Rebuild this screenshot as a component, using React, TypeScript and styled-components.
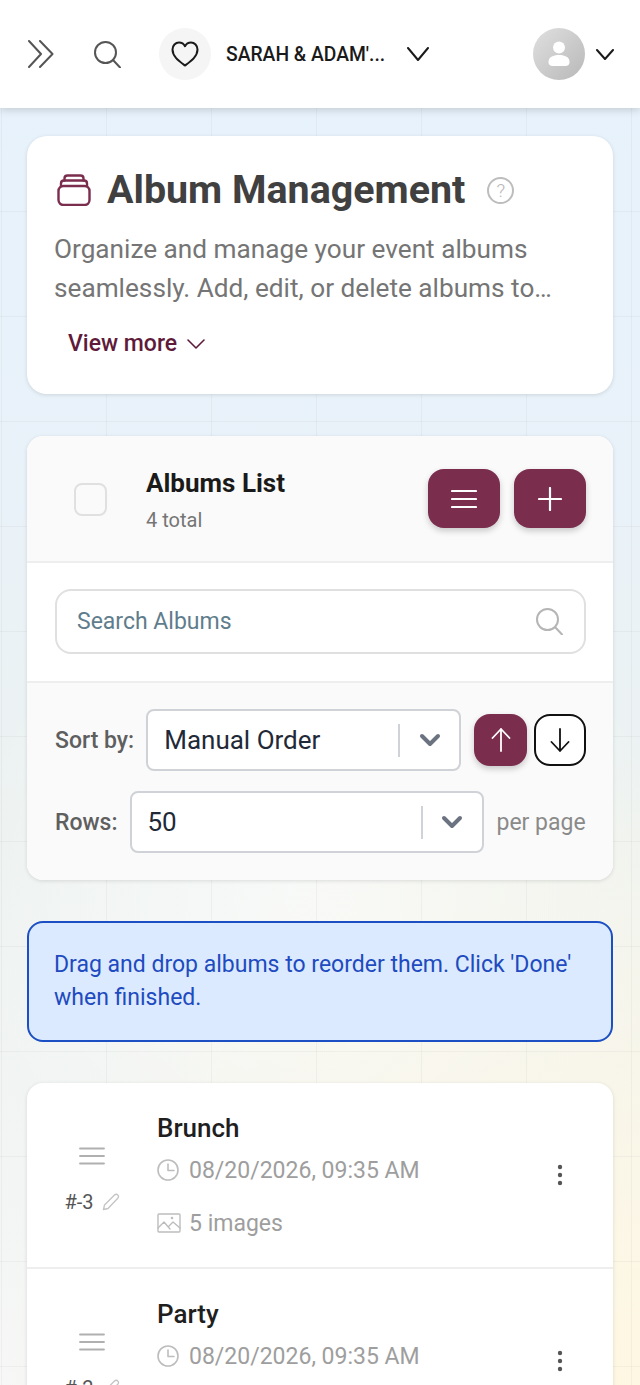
import React, { ReactNode } from 'react';
import styled, { createGlobalStyle } from 'styled-components';

const GlobalStyle = createGlobalStyle`
  html, body {
    margin: 0;
    padding: 0;
    background: #fff;
    font-family: Roboto, "Liberation Sans", sans-serif;
  }
  * { box-sizing: border-box; }
`;

const wine = '#7b2d4e';

const albums: { title: string; order: string; date: string; images?: string }[] = [
  { title: 'Brunch', order: '#-3', date: '08/20/2026, 09:35 AM', images: '5 images' },
  { title: 'Party', order: '#-2', date: '08/20/2026, 09:35 AM' },
];

function Icon(props: { size: number; height?: number; color?: string; sw?: number; children: ReactNode }) {
  const h = props.height ?? props.size;
  return (
    <svg
      width={props.size}
      height={h}
      viewBox={`0 0 ${props.size} ${h}`}
      fill="none"
      stroke={props.color ?? 'currentColor'}
      strokeWidth={props.sw ?? 2}
      strokeLinecap="round"
      strokeLinejoin="round"
    >
      {props.children}
    </svg>
  );
}

const SearchGlass = (p: { color: string }) => (
  <Icon size={28} color={p.color}>
    <circle cx="12.5" cy="12.5" r="10.5" />
    <path d="M20 20l7 7.5" />
  </Icon>
);

const Caret = (p: { color: string; w: number; h: number; sw?: number }) => (
  <Icon size={p.w} height={p.h} color={p.color} sw={p.sw}>
    <path d={`M1 1L${p.w / 2} ${p.h - 1}L${p.w - 1} 1`} />
  </Icon>
);

const SelectChevron = () => (
  <Icon size={22} height={14} color="#6b7280" sw={4}>
    <path d="M3 3l8 8l8-8" />
  </Icon>
);

export default function App() {
  return (
    <Screen>
      <GlobalStyle />
      <TopBar>
        <BarIcon>
          <Icon size={26} height={28} color="#555" sw={2}>
            <path d="M1 1l12 13L1 27M12 1l12.5 13L12 27" />
          </Icon>
        </BarIcon>
        <SearchSlot>
          <SearchGlass color="#555" />
        </SearchSlot>
        <EventAvatar>
          <Icon size={28} height={26} color="#1a1a1a" sw={2}>
            <path d="M14 24.5C8 20 1.5 15.5 1.5 8.5C1.5 4.5 4.5 1.5 8 1.5C10.6 1.5 12.8 2.8 14 5.2C15.2 2.8 17.4 1.5 20 1.5C23.5 1.5 26.5 4.5 26.5 8.5C26.5 15.5 20 20 14 24.5Z" />
          </Icon>
        </EventAvatar>
        <EventName>SARAH &amp; ADAM'...</EventName>
        <Caret color="#1a1a1a" w={22} h={14} />
        <Spacer />
        <UserAvatar>
          <svg width="22" height="26" viewBox="0 0 22 26" fill="#fff">
            <circle cx="11" cy="6.5" r="6" />
            <path d="M0.5 21C0.5 16 5 14 11 14C17 14 21.5 16 21.5 21C21.5 24 19.5 25 17 25H5C2.5 25 0.5 24 0.5 21Z" />
          </svg>
        </UserAvatar>
        <UserCaret>
          <Caret color="#1a1a1a" w={18} h={11} />
        </UserCaret>
      </TopBar>

      <Content>
        <IntroCard>
          <TitleRow>
            <Icon size={34} height={32} color={wine} sw={2.4}>
              <rect x="1.5" y="12" width="31" height="19" rx="5" />
              <path d="M4 12V9.5C4 7.5 5.5 6.5 7 6.5H27C28.5 6.5 30 7.5 30 9.5V12" />
              <path d="M7.5 6.5V4.5C7.5 2.5 9 1.5 10.5 1.5H23.5C25 1.5 26.5 2.5 26.5 4.5V6.5" />
            </Icon>
            <Title>Album Management</Title>
            <HelpBadge>?</HelpBadge>
          </TitleRow>
          <Description>
            Organize and manage your event albums
            <br />
            seamlessly. Add, edit, or delete albums to…
          </Description>
          <ViewMore>
            View more
            <Caret color="#5f1a3a" w={18} h={10} sw={1.6} />
          </ViewMore>
        </IntroCard>

        <ListCard>
          <ListHead>
            <CheckBox />
            <ListHeading>
              <ListTitle>Albums List</ListTitle>
              <ListCount>4 total</ListCount>
            </ListHeading>
            <WineButton>
              <Icon size={26} height={20} color="#fff" sw={2.2}>
                <path d="M1 2h24M1 10h24M1 18h24" />
              </Icon>
            </WineButton>
            <WineButton>
              <Icon size={24} color="#fff" sw={2.2}>
                <path d="M12 1v22M1 12h22" />
              </Icon>
            </WineButton>
          </ListHead>

          <SearchSection>
            <SearchBox>
              <SearchHint>Search Albums</SearchHint>
              <SearchGlass color="#b5b5b5" />
            </SearchBox>
          </SearchSection>

          <SortSection>
            <ControlRow>
              <ControlLabel>Sort by:</ControlLabel>
              <SelectBox $width={315}>
                <SelectValue>Manual Order</SelectValue>
                <SelectSplit />
                <SelectArrow>
                  <SelectChevron />
                </SelectArrow>
              </SelectBox>
              <OrderButton $active>
                <Icon size={20} height={24} color="#fff" sw={1.8}>
                  <path d="M10 23V1M1.5 10L10 1l8.5 9" />
                </Icon>
              </OrderButton>
              <OrderButton>
                <Icon size={20} height={24} color="#111" sw={1.8}>
                  <path d="M10 1v22M1.5 14l8.5 9l8.5-9" />
                </Icon>
              </OrderButton>
            </ControlRow>
            <ControlRow>
              <ControlLabel>Rows:</ControlLabel>
              <SelectBox $width={354}>
                <SelectValue>50</SelectValue>
                <SelectSplit />
                <SelectArrow>
                  <SelectChevron />
                </SelectArrow>
              </SelectBox>
              <PerPage>per page</PerPage>
            </ControlRow>
          </SortSection>
        </ListCard>

        <Notice>Drag and drop albums to reorder them. Click 'Done' when finished.</Notice>

        <RowsCard>
          {albums.map(a => (
            <AlbumRow key={a.title}>
              <HandleColumn>
                <Icon size={26} height={18} color="#b0b0b0" sw={1.8}>
                  <path d="M1 1.5h24M1 9h24M1 16.5h24" />
                </Icon>
                <OrderLine>
                  {a.order}
                  <Icon size={18} color="#c4c4c4" sw={1.3}>
                    <path d="M1.5 16.5l1-4.5L12.5 2c1-1 2.5-1 3.3 0c.8.8.8 2.3 0 3.2L6 15.5z" />
                  </Icon>
                </OrderLine>
              </HandleColumn>
              <AlbumInfo>
                <AlbumTitle>{a.title}</AlbumTitle>
                <DateLine>
                  <Icon size={22} color="#bdbdbd" sw={1.6}>
                    <circle cx="11" cy="11" r="10" />
                    <path d="M11 5v6.5h6" />
                  </Icon>
                  {a.date}
                </DateLine>
                {a.images && (
                  <ImagesLine>
                    <Icon size={24} height={20} color="#bdbdbd" sw={1.4}>
                      <rect x="1" y="1" width="22" height="18" rx="1" />
                      <path d="M1 15l6-6l6 7M12 13l4-4l7 6" />
                      <circle cx="15" cy="5" r="0.6" />
                    </Icon>
                    {a.images}
                  </ImagesLine>
                )}
              </AlbumInfo>
              <KebabColumn>
                <svg width="6" height="22" viewBox="0 0 6 22" fill="#555">
                  <circle cx="3" cy="3" r="2.2" />
                  <circle cx="3" cy="11" r="2.2" />
                  <circle cx="3" cy="19" r="2.2" />
                </svg>
              </KebabColumn>
            </AlbumRow>
          ))}
        </RowsCard>
      </Content>
    </Screen>
  );
}

const Screen = styled.div`
  width: 640px;
  height: 1385px;
  overflow: hidden;
  background-color: #f4f6f4;
  background-image:
    linear-gradient(to right, rgba(120, 120, 120, 0.07) 1px, transparent 1px),
    linear-gradient(to bottom, rgba(120, 120, 120, 0.07) 1px, transparent 1px),
    radial-gradient(circle at 100% 100%, rgba(254, 247, 226, 1) 0%, rgba(254, 247, 226, 0) 42%),
    radial-gradient(circle at 50% 65%, rgba(255, 255, 255, 0.6) 0%, rgba(255, 255, 255, 0) 38%),
    linear-gradient(180deg, #e6f2fc 0%, #e9f2f9 35%, #edf2f0 60%, #f6f7f6 100%);
  background-size: 105px 105px, 105px 105px, 100% 100%, 100% 100%, 100% 100%;
  background-position: 1px 1px, 1px 1px, 0 0, 0 0, 0 0;
`;

const TopBar = styled.header`
  height: 108px;
  display: flex;
  align-items: center;
  padding: 0 26px 0 28px;
  background: #fff;
  box-shadow: 0 2px 8px rgba(0, 0, 0, 0.16);
`;

const BarIcon = styled.div`
  width: 26px;
  display: flex;
`;

const SearchSlot = styled.div`
  margin-left: 39px;
  display: flex;
`;

const EventAvatar = styled.div`
  width: 52px;
  height: 52px;
  margin-left: 38px;
  border-radius: 50%;
  background: #f5f5f5;
  display: flex;
  align-items: center;
  justify-content: center;
`;

const EventName = styled.span`
  width: 159px;
  margin: 0 22px 0 15px;
  font-size: 19.3px;
  font-weight: 500;
  color: #1a1a1a;
  white-space: nowrap;
`;

const Spacer = styled.div`
  flex: 1;
`;

const UserAvatar = styled.div`
  width: 52px;
  height: 52px;
  border-radius: 50%;
  background: linear-gradient(135deg, #e0e0e0, #b8b8b8);
  display: flex;
  align-items: center;
  justify-content: center;
`;

const UserCaret = styled.div`
  margin-left: 11px;
  display: flex;
`;

const Content = styled.main`
  padding: 28px 27px 0;
  display: flex;
  flex-direction: column;
`;

const IntroCard = styled.section`
  height: 258px;
  padding: 30px 28px 0;
  background: #fff;
  border-radius: 20px;
  box-shadow: 0 1px 4px rgba(0, 0, 0, 0.12);
`;

const TitleRow = styled.div`
  display: flex;
  align-items: center;
  height: 48px;
  padding-left: 2px;
`;

const Title = styled.h1`
  margin: 0 22px 0 16px;
  font-size: 39.4px;
  font-weight: 700;
  line-height: 48px;
  color: #404040;
  white-space: nowrap;
`;

const HelpBadge = styled.span`
  width: 27px;
  height: 27px;
  border-radius: 50%;
  border: 2px solid #bdbdbd;
  display: flex;
  align-items: center;
  justify-content: center;
  font-size: 19px;
  font-weight: 300;
  color: #b5b5b5;
`;

const Description = styled.p`
  margin: 16px 0 0 -1px;
  font-size: 26.2px;
  line-height: 39px;
  color: #757575;
  white-space: nowrap;
`;

const ViewMore = styled.div`
  margin: 20px 0 0 13px;
  display: flex;
  align-items: center;
  gap: 10px;
  font-size: 23px;
  font-weight: 500;
  line-height: 32px;
  color: #5f1a3a;
`;

const ListCard = styled.section`
  margin-top: 42px;
  height: 444px;
  border-radius: 16px;
  background: #fff;
  overflow: hidden;
  box-shadow: 0 1px 4px rgba(0, 0, 0, 0.12);
`;

const ListHead = styled.div`
  height: 127px;
  padding: 0 27px 0 47px;
  display: flex;
  align-items: center;
  gap: 14px;
  background: #fafafa;
  border-bottom: 2px solid #eeeeee;
`;

const CheckBox = styled.div`
  width: 33px;
  height: 33px;
  margin-top: 1px;
  border: 2px solid #e0e0e0;
  border-radius: 8px;
`;

const ListHeading = styled.div`
  flex: 1;
  margin: 2px 0 0 25px;
  display: flex;
  flex-direction: column;
  gap: 8px;
`;

const ListTitle = styled.div`
  font-size: 26px;
  font-weight: 700;
  line-height: 32px;
  color: #1a1a1a;
`;

const ListCount = styled.div`
  font-size: 20px;
  line-height: 26px;
  color: #757575;
`;

const WineButton = styled.button`
  width: 72px;
  height: 59px;
  padding: 0;
  border: 0;
  border-radius: 16px;
  background: ${wine};
  display: flex;
  align-items: center;
  justify-content: center;
  box-shadow: 0 3px 6px rgba(0, 0, 0, 0.2);
`;

const SearchSection = styled.div`
  height: 120px;
  padding: 0 27px 2px 28px;
  display: flex;
  align-items: center;
  border-bottom: 2px solid #eeeeee;
`;

const SearchBox = styled.div`
  width: 100%;
  height: 65px;
  padding: 0 21px 0 20px;
  display: flex;
  align-items: center;
  justify-content: space-between;
  border: 2px solid #e0e0e0;
  border-radius: 16px;
  background: #fff;
`;

const SearchHint = styled.span`
  font-size: 23px;
  color: #5f7d8c;
`;

const SortSection = styled.div`
  height: 197px;
  padding: 26px 27px 0 28px;
  display: flex;
  flex-direction: column;
  gap: 20px;
  background: #fafafa;
`;

const ControlRow = styled.div`
  height: 62px;
  display: flex;
  align-items: center;
`;

const ControlLabel = styled.span`
  margin-right: 12px;
  font-size: 23px;
  font-weight: 500;
  color: #5f5f5f;
  white-space: nowrap;
`;

const SelectBox = styled.div<{ $width: number }>`
  width: ${p => p.$width}px;
  height: 62px;
  flex-shrink: 0;
  display: flex;
  align-items: center;
  border: 2px solid #cfd2d6;
  border-radius: 8px;
  background: #fff;
`;

const SelectValue = styled.span`
  flex: 1;
  padding-left: 16px;
  font-size: 26px;
  color: #1f2937;
`;

const SelectSplit = styled.div`
  width: 2px;
  height: 33px;
  background: #cfd2d6;
`;

const SelectArrow = styled.div`
  width: 59px;
  display: flex;
  justify-content: center;
`;

const OrderButton = styled.button<{ $active?: boolean }>`
  width: ${p => (p.$active ? 53 : 52)}px;
  height: 52px;
  padding: 0;
  margin-left: ${p => (p.$active ? 13 : 7)}px;
  border: ${p => (p.$active ? '0' : '2px solid #111')};
  border-radius: 16px;
  background: ${p => (p.$active ? wine : '#fff')};
  display: flex;
  align-items: center;
  justify-content: center;
  box-shadow: ${p => (p.$active ? '0 3px 6px rgba(0, 0, 0, 0.2)' : 'none')};
`;

const PerPage = styled.span`
  margin-left: 13px;
  font-size: 23px;
  color: #8a8a8a;
  white-space: nowrap;
`;

const Notice = styled.div`
  margin-top: 41px;
  height: 121px;
  padding: 25px 25px 0;
  border: 2px solid #1d4fc4;
  border-radius: 16px;
  background: #dbeafe;
  font-size: 23px;
  line-height: 33px;
  color: #1e4bbf;
`;

const RowsCard = styled.section`
  margin-top: 41px;
  border-radius: 16px;
  background: #fff;
  overflow: hidden;
  box-shadow: 0 1px 4px rgba(0, 0, 0, 0.12);
`;

const AlbumRow = styled.article`
  height: 186px;
  display: flex;
  align-items: center;
  border-bottom: 2px solid #eeeeee;
`;

const HandleColumn = styled.div`
  width: 130px;
  flex-shrink: 0;
  display: flex;
  flex-direction: column;
  align-items: center;
  gap: 25px;
  margin-top: 10px;
`;

const OrderLine = styled.div`
  display: flex;
  align-items: center;
  gap: 8px;
  font-size: 20px;
  line-height: 24px;
  color: #555;
`;

const AlbumInfo = styled.div`
  flex: 1;
  align-self: flex-start;
  padding-top: 28px;
  display: flex;
  flex-direction: column;
`;

const AlbumTitle = styled.div`
  font-size: 26px;
  font-weight: 500;
  line-height: 34px;
  color: #1f1f1f;
`;

const DateLine = styled.div`
  margin-top: 3px;
  height: 44px;
  display: flex;
  align-items: center;
  gap: 10px;
  font-size: 23px;
  color: #9e9e9e;
`;

const ImagesLine = styled(DateLine)`
  margin-top: 9px;
  gap: 8px;
`;

const KebabColumn = styled.div`
  width: 56px;
  flex-shrink: 0;
  display: flex;
`;
